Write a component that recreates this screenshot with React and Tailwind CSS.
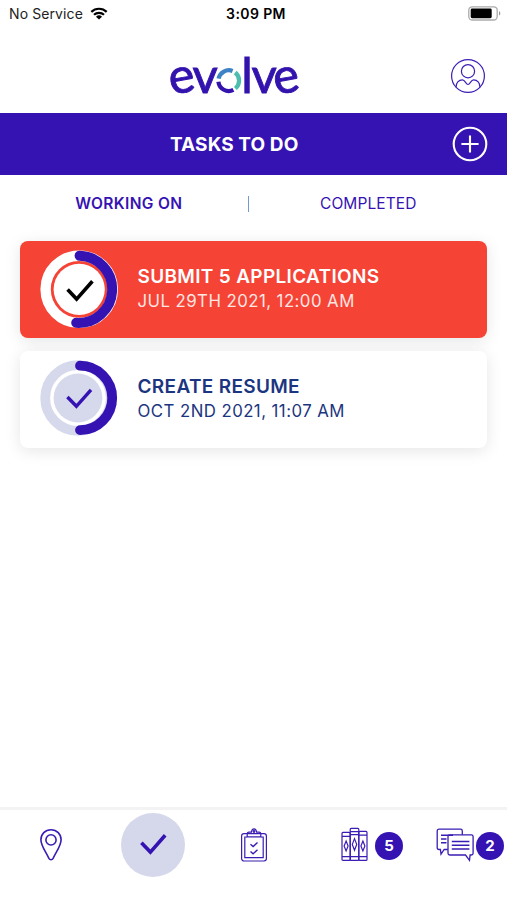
import React, { useState } from 'react';

const tasks = [
	{
		id: 1,
		title: 'SUBMIT 5 APPLICATIONS',
		due: 'JUL 29TH 2021, 12:00 AM',
		overdue: true,
	},
	{
		id: 2,
		title: 'CREATE RESUME',
		due: 'OCT 2ND 2021, 11:07 AM',
		overdue: false,
	},
];

function StatusBar() {
	return (
		<div className="h-7 flex items-center justify-between pl-[9px] pr-[6px] pb-[2px] text-black">
			<div className="w-[150px] flex items-center gap-[7px]">
				<span className="text-[14px] tracking-[0.1px] text-[#222]">No Service</span>
				<svg className="w-[18px] h-[13px]" viewBox="0 0 18 13">
					<path
						d="M1.3 4.9a11 11 0 0 1 15.4 0M4 7.8a7.2 7.2 0 0 1 10 0"
						fill="none"
						stroke="#000"
						strokeWidth="2.2"
					/>
					<path d="M9 12.6 6 9.7a4.3 4.3 0 0 1 6 0z" />
				</svg>
			</div>
			<span className="text-[14px] font-semibold tracking-[0.4px] ml-[2px]">3:09 PM</span>
			<div className="w-[150px] flex justify-end">
				<svg className="w-[33px] h-[15px]" viewBox="0 0 33 15">
					<rect x="0.8" y="0.8" width="28.4" height="13.2" rx="3.5" fill="none" stroke="#aaa" strokeWidth="1.3" />
					<rect x="2.7" y="2.6" width="21" height="9.6" rx="1.4" />
					<path d="M31 5.2v4.4c1.8-.6 1.8-3.8 0-4.4z" fill="#999" />
				</svg>
			</div>
		</div>
	);
}

function Logo() {
	return (
		<svg className="w-[150px] h-[76px] mt-[9px]" viewBox="-10 -16 150 76" fontFamily="Lato, sans-serif" fontSize="49">
			<g fill="#3313ad" stroke="#3313ad" strokeWidth="0.9">
				<text transform="translate(-.9 39.9) rotate(-10 12 -12)">e</text>
				<text transform="translate(22.4 39.6)">v</text>
				<text transform="translate(71.2 39.6)">l</text>
				<text transform="translate(81.6 39.6)">v</text>
				<text transform="translate(103.4 39.9) rotate(-10 12 -12)">e</text>
			</g>
			<g fill="none" strokeWidth="4.2">
				<path d="M48.4 28.8a10.4 10.4 0 0 0 15 8.1" stroke="#3313ad" />
				<path d="M48.6 25.6a10.4 10.4 0 0 1 14-7.6" stroke="#3d82c4" />
				<path d="M65.2 19.5a10.4 10.4 0 0 1 .2 16" stroke="#4dbdaf" />
			</g>
		</svg>
	);
}

function Header() {
	return (
		<header className="h-[85px] flex items-center justify-between pl-40 pr-[21px]">
			<Logo />
			<button type="button" className="mt-[10px]">
				<svg className="w-9 h-9" viewBox="0 0 36 36" fill="none" stroke="#3d1eb5" strokeWidth="1.2">
					<circle cx="18" cy="18" r="16.4" />
					<circle cx="18" cy="13.2" r="6.6" />
					<path d="M6 29.2c0-4.4 2.7-7.4 6.4-7.4 2.8 0 3.4 4.7 5.6 4.7s2.8-4.7 5.6-4.7c3.7 0 6.4 3 6.4 7.4" />
				</svg>
			</button>
		</header>
	);
}

function ProgressRing({ overdue }) {
	if (overdue) {
		return (
			<svg className="w-20 h-20 shrink-0" viewBox="0 0 80 80" fill="none">
				<circle cx="40.2" cy="40.3" r="33.6" stroke="#fff" strokeWidth="10.4" />
				<circle cx="40.2" cy="40.3" r="25.6" fill="#fff" />
				<path d="M40.6 6.7a33.6 33.6 0 1 1-3.4 67.1" stroke="#3513b2" strokeWidth="10" strokeLinecap="round" />
				<path d="m28.6 40.6 9 9.5L53.4 32.2" stroke="#000" strokeWidth="3.6" />
			</svg>
		);
	}
	return (
		<svg className="w-20 h-20 shrink-0" viewBox="0 0 80 80" fill="none">
			<circle cx="39" cy="39" r="32.8" stroke="#d6d9ec" strokeWidth="9.8" />
			<circle cx="39" cy="39" r="24.4" fill="#d6d9ec" />
			<path d="M41 6.7a32.2 32.2 0 0 1 0 64.4" stroke="#3513b2" strokeWidth="9.8" strokeLinecap="round" />
			<path d="m28.4 38 9 9.3L52 30.8" stroke="#3513b2" strokeWidth="3.4" />
		</svg>
	);
}

function TaskCard({ task }) {
	return (
		<div
			className={`h-[97px] rounded-[8px] pl-[18.5px] pb-[1px] flex items-center shadow-[0_3px_16px_rgba(0,0,0,0.1)] ${
				task.overdue ? 'bg-[#f54336] text-white' : 'bg-white text-[#1c3580]'
			}`}
		>
			<ProgressRing overdue={task.overdue} />
			<div className="ml-[19px]">
				<h2 className="text-[19px] leading-6 font-semibold tracking-[0.33px]">{task.title}</h2>
				<p className={`text-[16.8px] leading-6 tracking-[0.45px] ${task.overdue ? 'text-[#ffe6e3]' : ''}`}>
					{task.due}
				</p>
			</div>
		</div>
	);
}

function Badge({ children }) {
	return (
		<span className="w-7 h-7 mt-[2px] shrink-0 rounded-full bg-[#3513b2] text-white text-[15px] font-bold flex items-center justify-center">
			{children}
		</span>
	);
}

function TabBar() {
	return (
		<nav className="h-[93px] border-t-[3px] border-[#f3f3f3] bg-white flex items-start pt-[3px] text-[#3b1cb4]">
			<button type="button" className="w-[102px] h-16 flex items-center justify-center">
				<svg className="w-6 h-[34px]" viewBox="0 0 24 34" fill="none" stroke="currentColor" strokeWidth="1.6">
					<path d="M12 1.8c5.8 0 10.1 4.4 10.1 9.9 0 5.8-4.6 11.5-8 18.7-.9 1.8-3.3 1.8-4.2 0-3.4-7.2-8-12.9-8-18.7C1.9 6.2 6.2 1.8 12 1.8z" />
					<circle cx="12" cy="11.9" r="5.1" />
				</svg>
			</button>
			<button type="button" className="w-[102px] h-16 flex items-center justify-center">
				<span className="w-16 h-16 rounded-full bg-[#d5d8eb] flex items-center justify-center">
					<svg className="w-7 h-6" viewBox="0 0 28 24" fill="none" stroke="#3513b2" strokeWidth="3.6">
						<path d="m2.4 9.8 9 9.3L26.2 2.3" />
					</svg>
				</span>
			</button>
			<button type="button" className="w-[100px] h-16 flex items-center justify-center">
				<svg className="w-7 h-9" viewBox="0 0 28 36" fill="none" stroke="currentColor" strokeWidth="1.2">
					<rect x="1.6" y="6.6" width="24.8" height="27.4" rx="2.4" />
					<path d="M7 10H4.8v20.6h18.4V10H21" />
					<path d="M9 5.2h2.4c.5-4.5 4.7-4.5 5.2 0H19c1.3 0 1.8.8 1.8 2v2.6H7.2V7.2c0-1.2.5-2 1.8-2z" />
					<circle cx="14" cy="4.5" r=".8" />
					<path d="m10.5 17.2 2.6 2.4 4.4-4M10.5 24.4l2.6 2.4 4.4-4" strokeWidth="1.4" />
				</svg>
			</button>
			<button type="button" className="w-[131px] h-16 pl-[37px] flex items-center gap-[7px]">
				<svg className="w-[27px] h-9" viewBox="0 0 27 36" fill="none" stroke="currentColor" strokeWidth="1.2">
					<rect x="1" y="5.4" width="8.2" height="28" rx="1" />
					<rect x="9.2" y="1.4" width="8.6" height="32" rx="1" />
					<rect x="17.8" y="4.4" width="8.2" height="29" rx="1" />
					<path d="M1 9.4h8.2M1 29.6h8.2M9.2 4.6h8.6M9.2 7.6h8.6M9.2 29.6h8.6M17.8 8.2H26M17.8 29.6H26" />
					<path d="m5.1 14 2 5-2 5-2-5zM13.5 11.6l2.2 5.8-2.2 5.8-2.2-5.8zM21.9 14l2 5-2 5-2-5z" />
				</svg>
				<Badge>5</Badge>
			</button>
			<button type="button" className="h-16 flex items-center">
				<svg className="w-[41px] h-9 shrink-0" viewBox="0 0 41 36" fill="none" stroke="currentColor" strokeWidth="1.3">
					<path d="M12.8 22.5H9.2L6 27.2l-.6-4.7H4c-1.2 0-1.8-.7-1.8-1.8V4c0-1.2.7-1.8 1.8-1.8h21.5c1.2 0 1.8.7 1.8 1.8v3.8" />
					<path d="M14.8 7.8h21.5c1.2 0 1.8.7 1.8 1.8v16.6c0 1.2-.7 1.8-1.8 1.8h-1.2l-.6 5.4-4-5.4H14.8c-1.2 0-1.8-.7-1.8-1.8V9.6c0-1.1.7-1.8 1.8-1.8z" />
					<path d="M6 8.2h12M6 12h5.5M6 15.8h5.5M16.8 14.4h17.6M16.8 18.2h17.6M16.8 22h17.6" strokeWidth="1.5" />
				</svg>
				<Badge>2</Badge>
			</button>
		</nav>
	);
}

export default function App() {
	const [tab, setTab] = useState('working');

	return (
		<div className="w-full h-screen overflow-hidden bg-white flex flex-col font-[Inter,sans-serif]">
			<StatusBar />
			<Header />
			<div className="h-[62px] shrink-0 bg-[#3513b2] text-white flex items-center justify-between pl-[170px] pr-[19px]">
				<h1 className="pt-[3px] text-[19px] font-bold tracking-[0.1px]">TASKS TO DO</h1>
				<button type="button">
					<svg className="w-9 h-9" viewBox="0 0 36 36" fill="none" stroke="currentColor" strokeWidth="2.1">
						<circle cx="18" cy="18" r="16.3" />
						<path d="M18 9.4v17.2M9.4 18h17.2" />
					</svg>
				</button>
			</div>
			<div className="h-[56px] shrink-0 grid grid-cols-[1fr_2px_1fr] items-center text-[15.5px] text-[#3513b2] pt-[1px] pl-[10px] pr-[20px]">
				<button
					type="button"
					className={tab === 'working' ? 'font-semibold tracking-[0.35px]' : ''}
					onClick={() => setTab('working')}
				>
					WORKING ON
				</button>
				<span className="w-[1.5px] h-4 bg-[#6f9bd0]" />
				<button
					type="button"
					className={tab === 'completed' ? 'font-semibold' : 'tracking-[0.1px]'}
					onClick={() => setTab('completed')}
				>
					COMPLETED
				</button>
			</div>
			<main className="flex-1 pt-[10px] px-5 flex flex-col gap-[13px]">
				{tasks.map((task) => (
					<TaskCard key={task.id} task={task} />
				))}
			</main>
			<TabBar />
		</div>
	);
}
